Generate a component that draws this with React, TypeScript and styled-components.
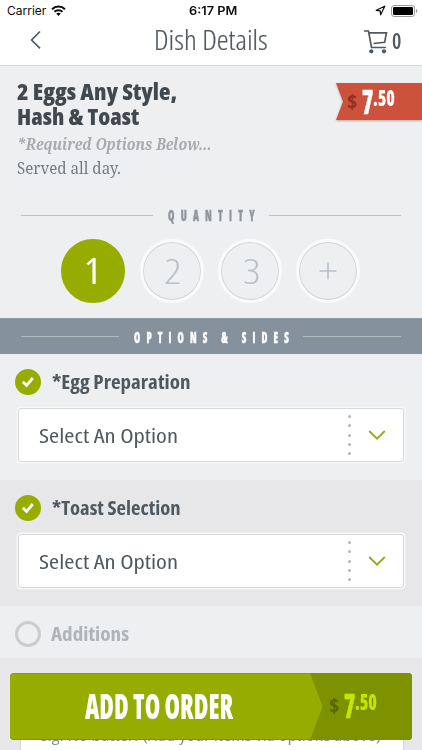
import React, { useLayoutEffect, useRef, useState } from "react";
import styled, { createGlobalStyle, css } from "styled-components";

const GlobalStyle = createGlobalStyle`
  *, *::before, *::after { box-sizing: border-box; }
  body { margin: 0; background: #eeeff1; }
`;

const sans = `"Open Sans", "Noto Sans", sans-serif`;
const serif = `"Noto Serif", "DejaVu Serif", serif`;

const FitBox = styled.span<{ $w: number }>`
  display: block;
  flex: none;
  width: ${(p) => p.$w}px;
  white-space: pre;
`;
const FitInner = styled.span`
  display: inline-block;
  vertical-align: top;
  transform-origin: 0 50%;
`;

/** Condenses or widens a line of text so that it fills exactly `width` pixels. */
function Fit({ width, children }: { width: number; children: string }) {
  const ref = useRef<HTMLSpanElement>(null);
  const [scale, setScale] = useState(1);
  useLayoutEffect(() => {
    if (ref.current) setScale(width / ref.current.offsetWidth);
  }, [width, children]);
  return (
    <FitBox $w={width}>
      <FitInner ref={ref} style={{ transform: `scaleX(${scale})` }}>
        {children}
      </FitInner>
    </FitBox>
  );
}

const Screen = styled.div`
  position: relative;
  width: 422px;
  height: 750px;
  overflow: hidden;
  background: #eeeff1;
  font-family: ${sans};
  color: #4f5860;
  display: flex;
  flex-direction: column;
`;

const StatusBar = styled.div`
  flex: none;
  height: 21px;
  background: #fff;
  display: grid;
  grid-template-columns: 1fr auto 1fr;
  align-items: center;
  padding: 0 4px 0 7px;
  color: #0b0b0b;
  font: 400 12px/21px Inter, sans-serif;
`;
const Carrier = styled.div`
  display: flex;
  align-items: center;
  gap: 5px;
`;
const Clock = styled.div`
  font-weight: 600;
`;
const Indicators = styled.div`
  display: flex;
  justify-content: flex-end;
  align-items: center;
  gap: 5px;
`;

const NavBar = styled.header`
  flex: none;
  height: 45px;
  background: #fff;
  border-bottom: 1px solid #d6d7d9;
  display: flex;
  align-items: flex-start;
`;
const Back = styled.button`
  border: 0;
  padding: 0;
  margin: 9px 0 0 29px;
  width: 14px;
  height: 20px;
  background: none;
  line-height: 0;
`;
const NavTitle = styled.h1`
  margin: 0 0 0 111px;
  font-size: 27px;
  line-height: 37px;
  font-weight: 350;
  font-stretch: 84%;
  -webkit-text-stroke: 0.2px currentColor;
`;
const Cart = styled.div`
  display: flex;
  align-items: flex-start;
  margin: 8px 0 0 96px;
  gap: 4px;
`;
const CartCount = styled.span`
  font-size: 22px;
  line-height: 23px;
  font-weight: 600;
  font-stretch: 75%;
`;

const Summary = styled.section`
  flex: none;
  height: 252px;
  padding: 12.5px 0 0 16px;
`;
const Top = styled.div`
  display: flex;
  height: 125.5px;
  justify-content: space-between;
  align-items: flex-start;
`;
const DishText = styled.div`
  padding-left: 0.5px;
`;
const DishName = styled.h2`
  margin: 0;
  font-size: 22px;
  line-height: 25.5px;
  font-weight: 800;
  font-stretch: 85%;
  color: #3f494f;
`;
const Required = styled.p`
  margin: 2px 0 0;
  font: italic 700 15.5px/24px ${serif};
  color: #a7abaf;
`;
const Description = styled.p`
  margin: 0;
  font: 400 16px/24px ${serif};
  color: #737b82;
`;

const Ribbon = styled.div`
  width: 86px;
  height: 37px;
  margin-top: 4.5px;
  filter: drop-shadow(0 1px 1px rgba(90, 40, 30, 0.35));
`;
const RibbonFace = styled.div`
  height: 37px;
  padding-left: 11px;
  display: flex;
  background: #cc523b;
  clip-path: polygon(0 0, 100% 0, 100% 100%, 0 100%, 7px 50%);
`;

const Price = styled.span<{ $main: string; $sign: string }>`
  display: flex;
  align-items: flex-start;
  color: ${(p) => p.$main};
  font-weight: 800;
  font-stretch: 75%;
  & > :first-child {
    color: ${(p) => p.$sign};
  }
`;
const Sign = styled.span`
  font-size: 19px;
  line-height: 38px;
  margin-right: 5px;
`;
const Whole = styled.span`
  font-size: 33px;
  line-height: 38px;
  -webkit-text-stroke: 0.5px currentColor;
`;
const Cents = styled.span`
  font-size: 22px;
  line-height: 29px;
`;

const Divider = styled.div<{ $band?: boolean }>`
  flex: none;
  display: flex;
  align-items: center;
  padding: 0 21px;
  font-size: 16.5px;
  font-weight: 800;
  font-stretch: 75%;
  letter-spacing: 10px;
  -webkit-text-stroke: 0.4px currentColor;
  line-height: 24px;
  color: #8f959b;
  ${(p) =>
    p.$band &&
    css`
      height: 36px;
      background: #85929d;
      color: #fff;
      border-top: 1px solid #8c99a3;
    `}
`;
const Rule = styled.i<{ $light?: boolean }>`
  flex: 1;
  height: 1px;
  background: ${(p) => (p.$light ? "#b0bac1" : "#bcbfc4")};
`;
const Caption = styled.div<{ $l: number; $r: number }>`
  margin: 0 ${(p) => p.$r}px 0 ${(p) => p.$l}px;
`;
const QuantityHead = styled.div`
  margin: -1px 0 0 -16px;
`;

const Quantities = styled.div`
  display: flex;
  gap: 14.3px;
  margin: 12px 0 0 45.3px;
`;
const Quantity = styled.button<{ $on?: boolean }>`
  width: 64px;
  height: 64px;
  padding: 0 0 3px;
  border-radius: 50%;
  border: 3px solid #f9fafa;
  background: #eeeff1;
  box-shadow: inset 0 0 0 1px #d2d4d7;
  color: #b9c0c7;
  font: 350 35.5px/54px ${sans};
  font-stretch: 80%;
  display: flex;
  align-items: center;
  justify-content: center;
  ${(p) =>
    p.$on &&
    css`
      padding-right: 3px;
      border-color: #96ad00;
      background: #96ad00;
      box-shadow: none;
      color: #fff;
      font-weight: 400;
    `}
  svg {
    margin-top: 3px;
  }
`;

const Group = styled.section<{ $alt?: boolean; $h: number }>`
  flex: none;
  height: ${(p) => p.$h}px;
  padding: 15px 18px 0 15px;
  background: ${(p) => (p.$alt ? "#e7e7e9" : "#eeeff1")};
`;
const GroupHead = styled.div<{ $muted?: boolean }>`
  display: flex;
  align-items: center;
  height: 26px;
  gap: ${(p) => (p.$muted ? 10 : 11)}px;
  font-size: 19.5px;
  line-height: 26px;
  font-weight: 700;
  font-stretch: 82%;
  color: ${(p) => (p.$muted ? "#b0b4b8" : "#4f5860")};
`;
const Mark = styled.span<{ $on?: boolean }>`
  flex: none;
  width: 26px;
  height: 26px;
  border-radius: 50%;
  border: 3px solid ${(p) => (p.$on ? "#96ad00" : "#cacdd0")};
  background: ${(p) => (p.$on ? "#96ad00" : "transparent")};
  display: flex;
  align-items: center;
  justify-content: center;
`;
const Select = styled.div`
  margin: 13px 0 0 3px;
  height: 54px;
  background: #fff;
  border: 1px solid #d6d8db;
  border-radius: 3px;
  box-shadow: 0 0 0 1.5px #f8f8f9;
  display: flex;
  align-items: center;
  padding: 0 17px 0 20px;
  font-size: 20.5px;
  line-height: 27px;
  font-stretch: 85%;
  color: #4f5860;
`;
const Grow = styled.span`
  flex: 1;
`;
const Dots = styled.span`
  display: flex;
  flex-direction: column;
  justify-content: space-between;
  height: 40px;
  margin-right: 17px;
  i {
    width: 3px;
    height: 3px;
    border-radius: 50%;
    background: #b3b6b9;
  }
`;
const Notes = styled.div`
  margin: 43px 0 0 5px;
  height: 74px;
  padding: 6px 0 0 18px;
  background: #fff;
  border: 1px solid #d6d8db;
  font-size: 17px;
  line-height: 24px;
  font-stretch: 85%;
  color: #8c9197;
`;

const OrderButton = styled.button`
  position: absolute;
  left: 10px;
  bottom: 10px;
  width: 402px;
  height: 67px;
  padding: 0;
  border: 0;
  border-radius: 4px;
  overflow: hidden;
  background: #96ad00;
  box-shadow: inset 0 -1px 0 rgba(110, 130, 0, 0.5), inset 0 1px 0 rgba(110, 130, 0, 0.35);
  display: flex;
  color: #fff;
  font-family: ${sans};
`;
const OrderText = styled.span`
  flex: none;
  width: 300px;
  padding-left: 75px;
  text-align: left;
  font-size: 36px;
  line-height: 66px;
  font-weight: 800;
  font-stretch: 75%;
`;
const OrderPrice = styled.span`
  flex: 1;
  height: 67px;
  padding: 14px 0 0 19px;
  display: flex;
  text-align: left;
  background: #7e9200;
  clip-path: polygon(0 0, 100% 0, 100% 100%, 0 100%, 12.5px 50%);
`;

function PriceTag({ main, sign }: { main: string; sign: string }) {
  return (
    <Price $main={main} $sign={sign}>
      <Sign><Fit width={10}>$</Fit></Sign>
      <Whole><Fit width={11}>7</Fit></Whole>
      <Cents><Fit width={22}>.50</Fit></Cents>
    </Price>
  );
}

function Checked() {
  return (
    <Mark $on>
      <svg width="14" height="12" viewBox="0 0 14 12" fill="none" stroke="#fff" strokeWidth="2.8">
        <path d="M1.8 5.7 5.6 9.4 11.8 2" />
      </svg>
    </Mark>
  );
}

function OptionSelect() {
  return (
    <Select>
      <Fit width={139}>Select An Option</Fit>
      <Grow />
      <Dots><i /><i /><i /><i /><i /></Dots>
      <svg width="18" height="12" viewBox="0 0 18 12" fill="none" stroke="#93ab1c" strokeWidth="1.9">
        <path d="M1.2 2 9 9.6 16.8 2" />
      </svg>
    </Select>
  );
}

export default function App() {
  return (
    <Screen>
      <GlobalStyle />
      <StatusBar>
        <Carrier>
          <Fit width={39}>Carrier</Fit>
          <svg width="15" height="11" viewBox="0 0 15 11" fill="none" stroke="#0b0b0b" strokeWidth="2">
            <path d="M1 4.2C4.6.7 10.4.7 14 4.2M3.5 6.8c2.2-2.1 5.8-2.1 8 0" />
            <path d="M5.2 8.6c1.3-1.2 3.3-1.2 4.6 0L7.5 10.9Z" fill="#0b0b0b" stroke="none" />
          </svg>
        </Carrier>
        <Clock><Fit width={48}>6:17 PM</Fit></Clock>
        <Indicators>
          <svg width="11" height="11" viewBox="0 0 11 11" fill="none" stroke="#0b0b0b" strokeWidth="1.2" strokeLinejoin="round">
            <path d="M9.8 1.2 1.2 5.3l4 .5.4 4Z" />
          </svg>
          <svg width="27" height="12" viewBox="0 0 27 12">
            <rect x=".5" y=".5" width="23" height="11" rx="2.6" fill="none" stroke="#9b9b9b" />
            <rect x="2" y="2" width="20" height="8" rx="1.2" fill="#000" />
            <path d="M25 4v4c1.7-.5 1.7-3.5 0-4Z" fill="#9b9b9b" />
          </svg>
        </Indicators>
      </StatusBar>
      <NavBar>
        <Back aria-label="Back">
          <svg width="14" height="20" viewBox="0 0 14 20" fill="none" stroke="#4f5860" strokeWidth="1.7">
            <path d="M11 1.5 2.6 10 11 18.4" />
          </svg>
        </Back>
        <NavTitle><Fit width={114}>Dish Details</Fit></NavTitle>
        <Cart>
          <svg width="24" height="25" viewBox="0 0 24 25" fill="none" stroke="#4f5860" strokeWidth="1.7">
            <path d="M0 2h4.5L7.5 18.5H22" />
            <path d="M5 3.8H22.5L20.6 13.3 9.500 14.500" />
            <circle cx="7.3" cy="22.3" r="2.1" fill="#4f5860" stroke="none" />
            <circle cx="20" cy="22.3" r="2.1" fill="#4f5860" stroke="none" />
          </svg>
          <CartCount><Fit width={9.5}>0</Fit></CartCount>
        </Cart>
      </NavBar>
      <Summary>
        <Top>
          <DishText>
            <DishName>
              <Fit width={160}>2 Eggs Any Style,</Fit>
              <Fit width={122}>Hash &amp; Toast</Fit>
            </DishName>
            <Required><Fit width={195}>*Required Options Below...</Fit></Required>
            <Description><Fit width={104}>Served all day.</Fit></Description>
          </DishText>
          <Ribbon>
            <RibbonFace><PriceTag main="#fff" sign="#93301f" /></RibbonFace>
          </Ribbon>
        </Top>
        <QuantityHead>
          <Divider>
            <Rule />
            <Caption $l={15} $r={8}><Fit width={93}>QUANTITY</Fit></Caption>
            <Rule />
          </Divider>
        </QuantityHead>
        <Quantities>
          <Quantity $on><Fit width={17}>1</Fit></Quantity>
          <Quantity><Fit width={17}>2</Fit></Quantity>
          <Quantity><Fit width={17}>3</Fit></Quantity>
          <Quantity aria-label="More">
            <svg width="18" height="18" viewBox="0 0 18 18" stroke="#b9c0c7" strokeWidth="1.6">
              <path d="M9 .5v17M.5 9h17" />
            </svg>
          </Quantity>
        </Quantities>
      </Summary>
      <Divider $band>
        <Rule $light />
        <Caption $l={15} $r={8}><Fit width={161}>OPTIONS &amp; SIDES</Fit></Caption>
        <Rule $light />
      </Divider>
      <Group $h={126}>
        <GroupHead><Checked /><Fit width={138}>*Egg Preparation</Fit></GroupHead>
        <OptionSelect />
      </Group>
      <Group $h={126} $alt>
        <GroupHead><Checked /><Fit width={129}>*Toast Selection</Fit></GroupHead>
        <OptionSelect />
      </Group>
      <Group $h={52}>
        <GroupHead $muted><Mark /><Fit width={78}>Additions</Fit></GroupHead>
      </Group>
      <Group $h={132} $alt>
        <Notes><Fit width={343}>e.g. No butter. (Add your items via options above)</Fit></Notes>
      </Group>
      <OrderButton>
        <OrderText><Fit width={148}>ADD TO ORDER</Fit></OrderText>
        <OrderPrice><PriceTag main="#c5e600" sign="#596900" /></OrderPrice>
      </OrderButton>
    </Screen>
  );
}
